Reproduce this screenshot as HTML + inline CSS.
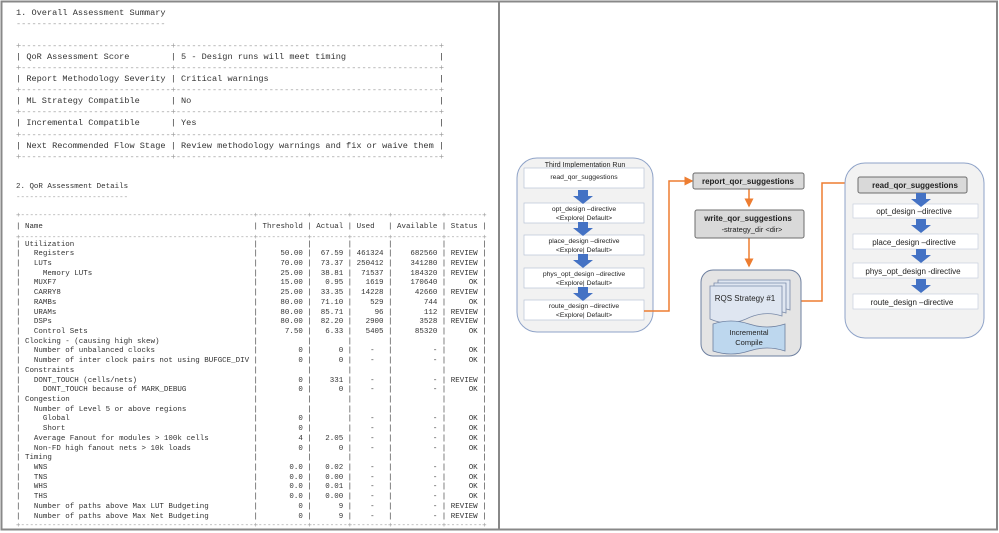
<!DOCTYPE html>
<html><head><meta charset="utf-8"><style>
html,body{margin:0;padding:0;background:#fff}
body{width:999px;height:533px;position:relative;overflow:hidden}
pre{position:absolute;margin:0;font-family:"Liberation Mono",monospace;color:#333;white-space:pre}
.s1{left:16px;font-size:8.6px;line-height:11.1px}
.s2{left:16px;font-size:7.48px;line-height:11px}
.s3{left:16px;font-size:7.48px;line-height:9.72px}
.g{color:#999}
b{font-weight:normal;display:inline-block}
.n{width:50ch}.t{width:9ch;text-align:right}.c{width:6ch;text-align:right}.u{width:6ch;text-align:right}.v{width:9ch;text-align:right}.s{width:6ch;text-align:right}
svg{position:absolute;left:0;top:0}
svg text{font-family:"Liberation Sans",sans-serif;fill:#222}
</style></head><body>
<pre class="s1" style="top:7.5px">1. Overall Assessment Summary
<span class="g">-----------------------------</span>

<span class="g">+-----------------------------+---------------------------------------------------+</span>
| QoR Assessment Score        | 5 - Design runs will meet timing                  |
<span class="g">+-----------------------------+---------------------------------------------------+</span>
| Report Methodology Severity | Critical warnings                                 |
<span class="g">+-----------------------------+---------------------------------------------------+</span>
| ML Strategy Compatible      | No                                                |
<span class="g">+-----------------------------+---------------------------------------------------+</span>
| Incremental Compatible      | Yes                                               |
<span class="g">+-----------------------------+---------------------------------------------------+</span>
| Next Recommended Flow Stage | Review methodology warnings and fix or waive them |
<span class="g">+-----------------------------+---------------------------------------------------+</span></pre>
<pre class="s2" style="top:181.5px">2. QoR Assessment Details
<span class="g">-------------------------</span></pre>
<pre class="s2" style="top:210.5px"><span class="g">+----------------------------------------------------+-----------+--------+--------+-----------+--------+</span>
| <b class="n">Name</b> | <b class="t">Threshold</b> | <b class="c">Actual</b> | <b class="u" style="text-align:left">Used</b> | <b class="v">Available</b> | <b class="s">Status</b> |
<span class="g">+----------------------------------------------------+-----------+--------+--------+-----------+--------+</span></pre>
<pre class="s3" style="top:240.5px">| <b class="n">Utilization</b> | <b class="t"></b> | <b class="c"></b> | <b class="u"></b> | <b class="v"></b> | <b class="s"></b> |
| <b class="n">  Registers</b> | <b class="t">50.00</b> | <b class="c">67.59</b> | <b class="u">461324</b> | <b class="v">682560</b> | <b class="s">REVIEW</b> |
| <b class="n">  LUTs</b> | <b class="t">70.00</b> | <b class="c">73.37</b> | <b class="u">250412</b> | <b class="v">341280</b> | <b class="s">REVIEW</b> |
| <b class="n">    Memory LUTs</b> | <b class="t">25.00</b> | <b class="c">38.81</b> | <b class="u">71537</b> | <b class="v">184320</b> | <b class="s">REVIEW</b> |
| <b class="n">  MUXF7</b> | <b class="t">15.00</b> | <b class="c">0.95</b> | <b class="u">1619</b> | <b class="v">170640</b> | <b class="s">OK</b> |
| <b class="n">  CARRY8</b> | <b class="t">25.00</b> | <b class="c">33.35</b> | <b class="u">14228</b> | <b class="v">42660</b> | <b class="s">REVIEW</b> |
| <b class="n">  RAMBs</b> | <b class="t">80.00</b> | <b class="c">71.10</b> | <b class="u">529</b> | <b class="v">744</b> | <b class="s">OK</b> |
| <b class="n">  URAMs</b> | <b class="t">80.00</b> | <b class="c">85.71</b> | <b class="u">96</b> | <b class="v">112</b> | <b class="s">REVIEW</b> |
| <b class="n">  DSPs</b> | <b class="t">80.00</b> | <b class="c">82.20</b> | <b class="u">2900</b> | <b class="v">3528</b> | <b class="s">REVIEW</b> |
| <b class="n">  Control Sets</b> | <b class="t">7.50</b> | <b class="c">6.33</b> | <b class="u">5405</b> | <b class="v">85320</b> | <b class="s">OK</b> |
| <b class="n">Clocking - (causing high skew)</b> | <b class="t"></b> | <b class="c"></b> | <b class="u"></b> | <b class="v"></b> | <b class="s"></b> |
| <b class="n">  Number of unbalanced clocks</b> | <b class="t">0</b> | <b class="c">0</b> | <b class="u">-  </b> | <b class="v">-</b> | <b class="s">OK</b> |
| <b class="n">  Number of inter clock pairs not using BUFGCE_DIV</b> | <b class="t">0</b> | <b class="c">0</b> | <b class="u">-  </b> | <b class="v">-</b> | <b class="s">OK</b> |
| <b class="n">Constraints</b> | <b class="t"></b> | <b class="c"></b> | <b class="u"></b> | <b class="v"></b> | <b class="s"></b> |
| <b class="n">  DONT_TOUCH (cells/nets)</b> | <b class="t">0</b> | <b class="c">331</b> | <b class="u">-  </b> | <b class="v">-</b> | <b class="s">REVIEW</b> |
| <b class="n">    DONT_TOUCH because of MARK_DEBUG</b> | <b class="t">0</b> | <b class="c">0</b> | <b class="u">-  </b> | <b class="v">-</b> | <b class="s">OK</b> |
| <b class="n">Congestion</b> | <b class="t"></b> | <b class="c"></b> | <b class="u"></b> | <b class="v"></b> | <b class="s"></b> |
| <b class="n">  Number of Level 5 or above regions</b> | <b class="t"></b> | <b class="c"></b> | <b class="u"></b> | <b class="v"></b> | <b class="s"></b> |
| <b class="n">    Global</b> | <b class="t">0</b> | <b class="c"></b> | <b class="u">-  </b> | <b class="v">-</b> | <b class="s">OK</b> |
| <b class="n">    Short</b> | <b class="t">0</b> | <b class="c"></b> | <b class="u">-  </b> | <b class="v">-</b> | <b class="s">OK</b> |
| <b class="n">  Average Fanout for modules &gt; 100k cells</b> | <b class="t">4</b> | <b class="c">2.05</b> | <b class="u">-  </b> | <b class="v">-</b> | <b class="s">OK</b> |
| <b class="n">  Non-FD high fanout nets &gt; 10k loads</b> | <b class="t">0</b> | <b class="c">0</b> | <b class="u">-  </b> | <b class="v">-</b> | <b class="s">OK</b> |
| <b class="n">Timing</b> | <b class="t"></b> | <b class="c"></b> | <b class="u"></b> | <b class="v"></b> | <b class="s"></b> |
| <b class="n">  WNS</b> | <b class="t">0.0</b> | <b class="c">0.02</b> | <b class="u">-  </b> | <b class="v">-</b> | <b class="s">OK</b> |
| <b class="n">  TNS</b> | <b class="t">0.0</b> | <b class="c">0.00</b> | <b class="u">-  </b> | <b class="v">-</b> | <b class="s">OK</b> |
| <b class="n">  WHS</b> | <b class="t">0.0</b> | <b class="c">0.01</b> | <b class="u">-  </b> | <b class="v">-</b> | <b class="s">OK</b> |
| <b class="n">  THS</b> | <b class="t">0.0</b> | <b class="c">0.00</b> | <b class="u">-  </b> | <b class="v">-</b> | <b class="s">OK</b> |
| <b class="n">  Number of paths above Max LUT Budgeting</b> | <b class="t">0</b> | <b class="c">9</b> | <b class="u">-  </b> | <b class="v">-</b> | <b class="s">REVIEW</b> |
| <b class="n">  Number of paths above Max Net Budgeting</b> | <b class="t">0</b> | <b class="c">9</b> | <b class="u">-  </b> | <b class="v">-</b> | <b class="s">REVIEW</b> |
<span class="g">+----------------------------------------------------+-----------+--------+--------+-----------+--------+</span></pre>

<svg width="999" height="533" viewBox="0 0 999 533">
<defs>
<path id="ba" d="M-5,0 h10 v6 h5 l-10,8 l-10,-8 h5 z" fill="#4472c4"/>
<marker id="oa" markerWidth="6" markerHeight="6" refX="5" refY="3" orient="auto"><path d="M0,0 L6,3 L0,6 z" fill="#ed7d31"/></marker>
</defs>
<rect x="1.5" y="1.5" width="995.5" height="528" fill="none" stroke="#888" stroke-width="2"/>
<line x1="499" y1="1" x2="499" y2="530" stroke="#888" stroke-width="2"/>

<rect x="517" y="158" width="136" height="174" rx="20" fill="#f2f2f2" stroke="#8fa3c8"/>
<text x="585" y="167" font-size="7" text-anchor="middle">Third Implementation Run</text>
<g fill="#fff" stroke="#b8c4d8" stroke-width="0.7">
<rect x="524" y="168" width="120" height="20"/>
<rect x="524" y="203" width="120" height="20"/>
<rect x="524" y="235" width="120" height="20"/>
<rect x="524" y="268" width="120" height="20"/>
<rect x="524" y="300" width="120" height="20"/>
</g>
<use href="#ba" x="583" y="190"/>
<use href="#ba" x="583" y="222"/>
<use href="#ba" x="583" y="254"/>
<use href="#ba" x="583" y="287"/>
<g font-size="6.8" text-anchor="middle">
<text x="584" y="179">read_qor_suggestions</text>
<text x="584" y="211">opt_design –directive</text><text x="584" y="220">&lt;Explore| Default&gt;</text>
<text x="584" y="243">place_design –directive</text><text x="584" y="252">&lt;Explore| Default&gt;</text>
<text x="584" y="276">phys_opt_design –directive</text><text x="584" y="285">&lt;Explore| Default&gt;</text>
<text x="584" y="308">route_design –directive</text><text x="584" y="317">&lt;Explore| Default&gt;</text>
</g>

<g stroke="#ed7d31" stroke-width="1.5" fill="none" marker-end="url(#oa)">
<path d="M644,311 H669 V181 H692"/>
<path d="M749,189 V206"/>
<path d="M749,238 V266"/>
<path d="M801,301 H822 V183 H856"/>
</g>

<rect x="693" y="173" width="111" height="16" rx="2" fill="#d9d9d9" stroke="#6d6d6d"/>
<text x="748" y="184" font-size="8" font-weight="bold" text-anchor="middle">report_qor_suggestions</text>
<rect x="695" y="210" width="109" height="28" rx="2" fill="#d9d9d9" stroke="#6d6d6d"/>
<text x="748" y="221" font-size="8" font-weight="bold" text-anchor="middle">write_qor_suggestions</text>
<text x="752" y="232" font-size="7.5" text-anchor="middle">-strategy_dir &lt;dir&gt;</text>

<rect x="701" y="270" width="100" height="86" rx="12" fill="#e4e4e4" stroke="#6d7f9f"/>
<g fill="#dfe6f1" stroke="#7a8aa8" stroke-width="0.8">
<path d="M718,280 h72 v30 q-18,-6 -36,3 q-18,8 -36,0 z"/>
<path d="M714,283 h72 v30 q-18,-6 -36,3 q-18,8 -36,0 z"/>
<path d="M710,286 h72 v30 q-18,-6 -36,3 q-18,8 -36,0 z"/>
</g>
<text x="745" y="301" font-size="8" text-anchor="middle">RQS Strategy #1</text>
<path d="M713,324 q18,-6 36,0 q18,6 36,0 v27 q-18,-6 -36,0 q-18,6 -36,0 z" fill="#bdd7ee" stroke="#6d7f9f" stroke-width="0.8"/>
<text x="749" y="335" font-size="7.5" text-anchor="middle">Incremental</text>
<text x="749" y="345" font-size="7.5" text-anchor="middle">Compile</text>

<rect x="845" y="163" width="139" height="175" rx="20" fill="#f2f2f2" stroke="#8fa3c8"/>
<rect x="858" y="177" width="109" height="16" rx="2" fill="#d9d9d9" stroke="#6d6d6d"/>
<text x="915" y="188" font-size="8" font-weight="bold" text-anchor="middle">read_qor_suggestions</text>
<g fill="#fff" stroke="#c8d0de" stroke-width="0.7">
<rect x="853" y="204" width="125" height="14"/>
<rect x="853" y="234" width="125" height="15"/>
<rect x="853" y="263" width="125" height="15"/>
<rect x="853" y="294" width="125" height="15"/>
</g>
<use href="#ba" x="921" y="193"/>
<use href="#ba" x="921" y="219"/>
<use href="#ba" x="921" y="249"/>
<use href="#ba" x="921" y="279"/>
<g font-size="8" text-anchor="middle">
<text x="914" y="214">opt_design –directive</text>
<text x="914" y="245">place_design –directive</text>
<text x="913" y="274">phys_opt_design -directive</text>
<text x="912" y="305">route_design –directive</text>
</g>
</svg>
</body></html>
